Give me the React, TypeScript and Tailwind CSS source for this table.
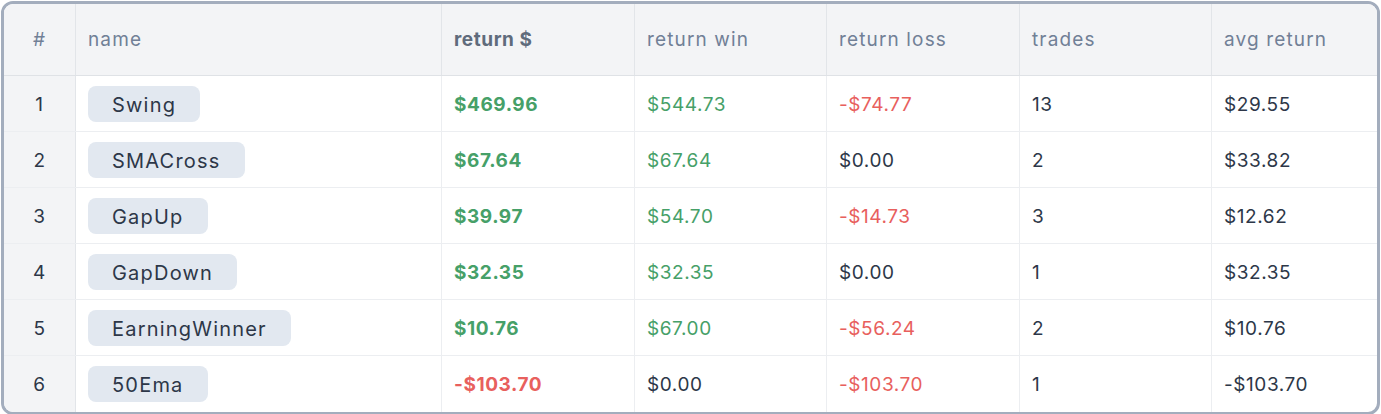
import React from "react";

type Row = {
  name: string;
  ret: string;
  win: string;
  loss: string;
  trades: number;
  avg: string;
};

const rows: Row[] = [
  { name: "Swing", ret: "$469.96", win: "$544.73", loss: "-$74.77", trades: 13, avg: "$29.55" },
  { name: "SMACross", ret: "$67.64", win: "$67.64", loss: "$0.00", trades: 2, avg: "$33.82" },
  { name: "GapUp", ret: "$39.97", win: "$54.70", loss: "-$14.73", trades: 3, avg: "$12.62" },
  { name: "GapDown", ret: "$32.35", win: "$32.35", loss: "$0.00", trades: 1, avg: "$32.35" },
  { name: "EarningWinner", ret: "$10.76", win: "$67.00", loss: "-$56.24", trades: 2, avg: "$10.76" },
  { name: "50Ema", ret: "-$103.70", win: "$0.00", loss: "-$103.70", trades: 1, avg: "-$103.70" },
];

const tone = (v: string) =>
  v.startsWith("-") ? "text-[#e8605d]" : v === "$0.00" ? "text-[#2d3748]" : "text-[#46a068]";

const grid = "grid grid-cols-[72px_366px_193px_192px_193px_192px_1fr]";
const cell = "flex items-center px-3 pt-[3px] border-r border-[#eceef1]";
const head = "flex items-center px-3 pt-[2px] border-r border-[#e2e5e9]";

export default function App() {
  return (
    <div className="p-px bg-white" style={{ fontFamily: "Inter, 'Noto Sans', sans-serif" }}>
      <div className="border-[3px] border-[#a3adbd] rounded-[12px] overflow-hidden text-[19px] tracking-[0.03em]">
        {/* header */}
        <div className={join(grid, "h-[72px] bg-[#f3f4f6] text-[#718096] tracking-[0.06em] border-b border-[#dfe2e6]")}>
          <div className={head + " justify-center"}>#</div>
          <div className={head}>name</div>
          <div className={head + " font-bold text-[#5f6b7c] tracking-[0.03em]"}>return $</div>
          <div className={head}>return win</div>
          <div className={head}>return loss</div>
          <div className={head}>trades</div>
          <div className="flex items-center px-3 pt-[2px]">avg return</div>
        </div>

        {rows.map((r, i) => (
          <div
            key={r.name}
            className={join(grid, "h-[56px] text-[#2d3748]", i < rows.length - 1 ? "border-b border-[#eceef1]" : "")}
          >
            <div className="flex items-center justify-center pt-[3px] bg-[#f3f4f6] border-r border-[#e2e5e9]">{i + 1}</div>
            <div className="flex items-center px-3 border-r border-[#eceef1]">
              <span className="bg-[#e2e8f0] rounded-[8px] h-9 px-6 pt-[2px] flex items-center text-[20px] tracking-[0.06em]">
                {r.name}
              </span>
            </div>
            <div className={cell + " font-bold " + tone(r.ret)}>{r.ret}</div>
            <div className={cell + " " + tone(r.win)}>{r.win}</div>
            <div className={cell + " " + tone(r.loss)}>{r.loss}</div>
            <div className={cell}>{r.trades}</div>
            <div className="flex items-center px-3 pt-[3px]">{r.avg}</div>
          </div>
        ))}
      </div>
    </div>
  );
}

function join(...parts: string[]) {
  return parts.filter(Boolean).join(" ");
}
